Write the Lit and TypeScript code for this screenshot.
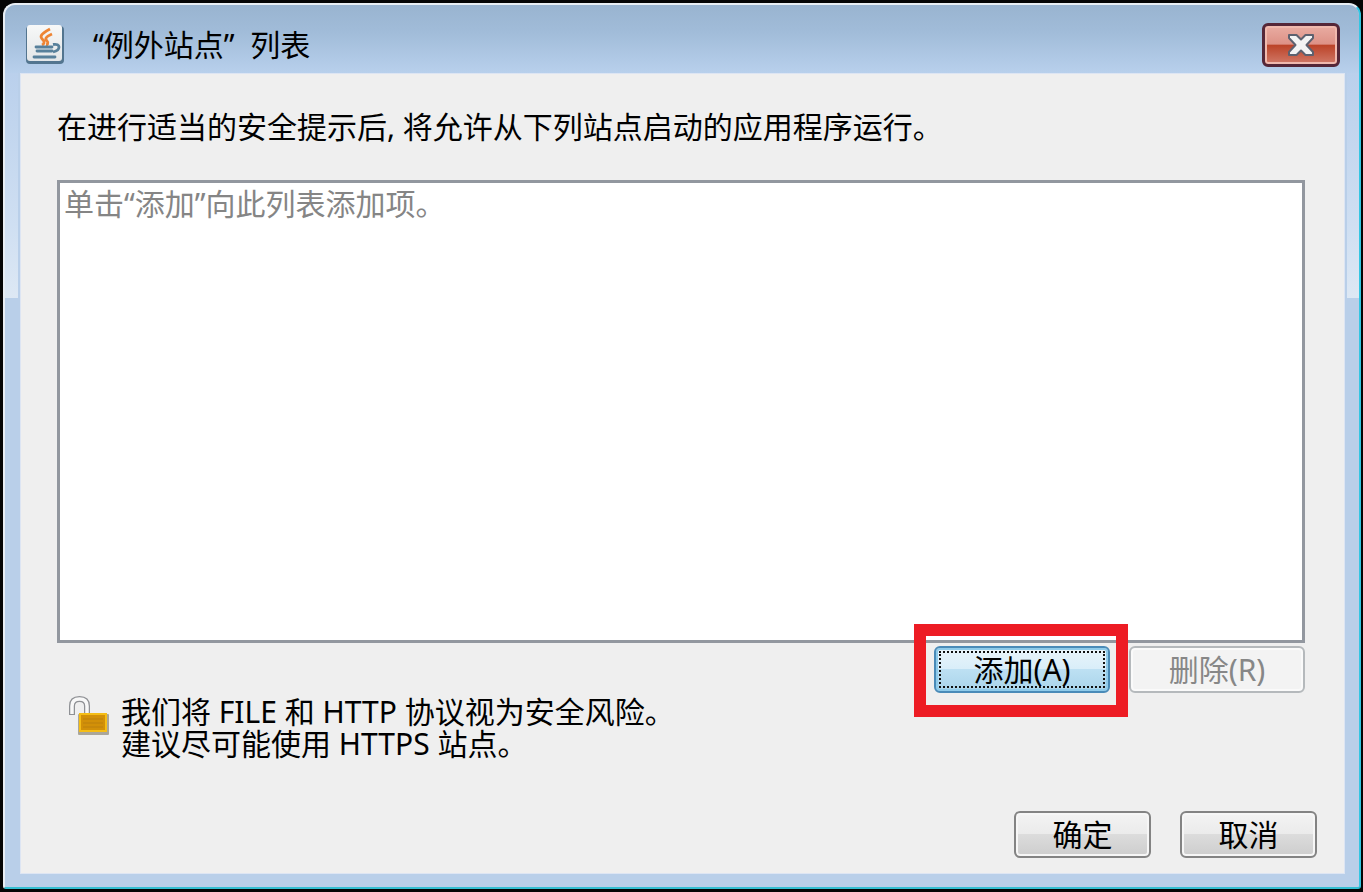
import { LitElement, html, css } from "lit";
import { customElement } from "lit/decorators.js";

@customElement("app-root")
export class AppRoot extends LitElement {
  static styles = css`
    :host {
      box-sizing: border-box;
      min-height: 100vh;
      padding: 3px 2px 3px 3px;
      background: #050505;
      display: flex;
      font-family: "Noto Sans", "Noto Sans CJK SC", sans-serif;
      font-size: 30px;
      line-height: 32px;
      color: #000;
    }
    * {
      box-sizing: border-box;
    }
    .window {
      flex: 1;
      min-width: 0;
      display: flex;
      flex-direction: column;
      padding: 0 14px 13px 15px;
      border: 2px solid;
      border-color: #e8eef4 #33c6e2 #33bfd2 #e8eef4;
      border-radius: 12px 12px 3px 3px;
      background:
        linear-gradient(#b9d1ee, #bad0ec 68px, #cfdff2 220px, #dde8f4) left 0 top 0 / 13px 293px no-repeat,
        linear-gradient(#b9d1ee, #bad0ec 68px, #cfdff2 220px, #dde8f4) right 0 top 0 / 12px 293px no-repeat,
        #b9cfe9;
    }
    .titlebar {
      display: flex;
      align-items: center;
      height: 68px;
      margin: 0 -14px 0 -15px;
      padding: 16px 19px 4px 20px;
      border-radius: 10px 10px 0 0;
      background: linear-gradient(#99b4d0, #a1bcd9 40%, #b8d0ec);
    }
    .java {
      width: 40px;
      height: 40px;
      flex: none;
    }
    .title {
      flex: 1;
      margin: 0 0 0 28px;
      font-size: 30px;
      font-weight: 400;
      white-space: pre;
    }
    .close {
      width: 78px;
      height: 44px;
      padding: 0;
      border: 3px solid #552738;
      border-radius: 6px;
      background: linear-gradient(#e9aca2, #dd9186 48%, #bb4227 50%, #d17a69);
      box-shadow: inset 0 0 0 2px #f0b9ae;
      display: flex;
      align-items: center;
      justify-content: center;
    }
    .panel {
      flex: 1;
      display: flex;
      flex-direction: column;
      padding: 37px 39px 15px 36px;
      border: 1px solid #dde5f3;
      background: #efefef;
    }
    .intro {
      margin: 0 0 37px;
    }
    .sites {
      flex: 1;
      min-height: 120px;
      margin: 0 0 3px;
      padding: 5px 4px;
      border: 3px solid #92979f;
      background: #fff;
      color: #858585;
      list-style: none;
    }
    .actions {
      display: flex;
      justify-content: flex-end;
      gap: 19px;
    }
    .marked {
      position: relative;
    }
    .marker {
      position: absolute;
      inset: -22px -18px -24px -20px;
      border: 12px solid #ed1c24;
      pointer-events: none;
    }
    .btn {
      display: block;
      width: 137px;
      height: 47px;
      padding: 0;
      border: 2px solid #838383;
      border-radius: 6px;
      background: linear-gradient(#f3f3f3, #ebebeb 48%, #dcdcdc 50%, #cdcdcd);
      box-shadow: inset 0 0 0 2px #f6f6f6;
      font: inherit;
      color: #000;
    }
    .btn.wide {
      width: 176px;
    }
    .btn.active {
      border-color: #4a8bb8;
      background: linear-gradient(#eaf5fb, #d9eef9 48%, #bde0f3 50%, #a9d4ea);
      box-shadow: inset 0 0 0 2px #8fcbea;
      outline: 2px dotted #111;
      outline-offset: -7px;
    }
    .btn:disabled {
      border-color: #b5b9bc;
      background: #f3f3f3;
      box-shadow: inset 0 0 0 2px #fafafa;
      color: #878787;
    }
    .notice {
      display: flex;
      gap: 10px;
      margin: 3px 0 51px 12px;
    }
    .notice p {
      margin: 0;
    }
    .lock {
      width: 42px;
      height: 42px;
      flex: none;
    }
    .footer {
      display: flex;
      justify-content: flex-end;
      gap: 29px;
      margin-right: -12px;
    }
  `;

  render() {
    return html`
      <section class="window" role="dialog" aria-labelledby="title">
        <header class="titlebar">
          <svg class="java" viewBox="0 0 40 40" aria-hidden="true">
            <defs>
              <linearGradient id="tile" x1="0" y1="0" x2="0" y2="1">
                <stop offset="0" stop-color="#f7f8f8" />
                <stop offset="1" stop-color="#e3e6e8" />
              </linearGradient>
            </defs>
            <rect x="1" y="1" width="38" height="38" rx="4" fill="#53758f" />
            <rect x="2" y="0" width="35" height="36" rx="3" fill="url(#tile)" />
            <path d="M25 4C14 10 15 12 18 15C20 17 19 19 17 20M27 9C20 12 20 14 22 16C24 18 22 20 21 20" fill="none" stroke="#ee8534" stroke-width="2.8" />
            <path d="M11 22H27M12 26H27M9 32H30" fill="none" stroke="#57809b" stroke-width="2.8" stroke-linecap="round" />
            <path d="M28 19.5C36 18 36 25 28 27" fill="none" stroke="#57809b" stroke-width="2.8" />
          </svg>
          <h1 class="title" id="title">“例外站点”  列表</h1>
          <button class="close" type="button" aria-label="关闭">
            <svg width="28" height="24" viewBox="0 0 28 24" aria-hidden="true">
              <path d="M2 2H9.500L14 6.500L18.500 2H26V5L19.500 12L26 19V22H18.500L14 17.500L9.500 22H2V19L8.500 12L2 5Z" fill="#f3f3f3" stroke="#5d616f" stroke-width="2" stroke-linejoin="round" />
            </svg>
          </button>
        </header>
        <main class="panel">
          <p class="intro">在进行适当的安全提示后, 将允许从下列站点启动的应用程序运行。</p>
          <ul class="sites">
            <li>单击“添加”向此列表添加项。</li>
          </ul>
          <div class="actions">
            <div class="marked">
              <button class="btn wide active" type="button">添加(A)</button>
              <span class="marker"></span>
            </div>
            <button class="btn wide" type="button" disabled>删除(R)</button>
          </div>
          <div class="notice">
            <svg class="lock" viewBox="0 0 42 42" aria-hidden="true">
              <path d="M3 19V10Q3 3 10.500 3Q18 3 18 10V17" fill="none" stroke="#8f9195" stroke-width="6" />
              <path d="M3 18V10Q3 3 10.500 3Q18 3 18 10V17" fill="none" stroke="#f8f8f8" stroke-width="3.500" />
              <rect x="9" y="18" width="31" height="21" rx="1" fill="#aaa69a" />
              <rect x="10" y="17" width="28" height="19" fill="#d29008" />
              <rect x="11" y="18" width="26" height="17" fill="none" stroke="#f5bd16" stroke-width="2" />
              <path d="M14 23H34M14 27H34M14 31H34" stroke="#c4850b" stroke-width="1.500" />
            </svg>
            <p>我们将 FILE 和 HTTP 协议视为安全风险。<br />建议尽可能使用 HTTPS 站点。</p>
          </div>
          <footer class="footer">
            <button class="btn" type="button">确定</button>
            <button class="btn" type="button">取消</button>
          </footer>
        </main>
      </section>
    `;
  }
}
